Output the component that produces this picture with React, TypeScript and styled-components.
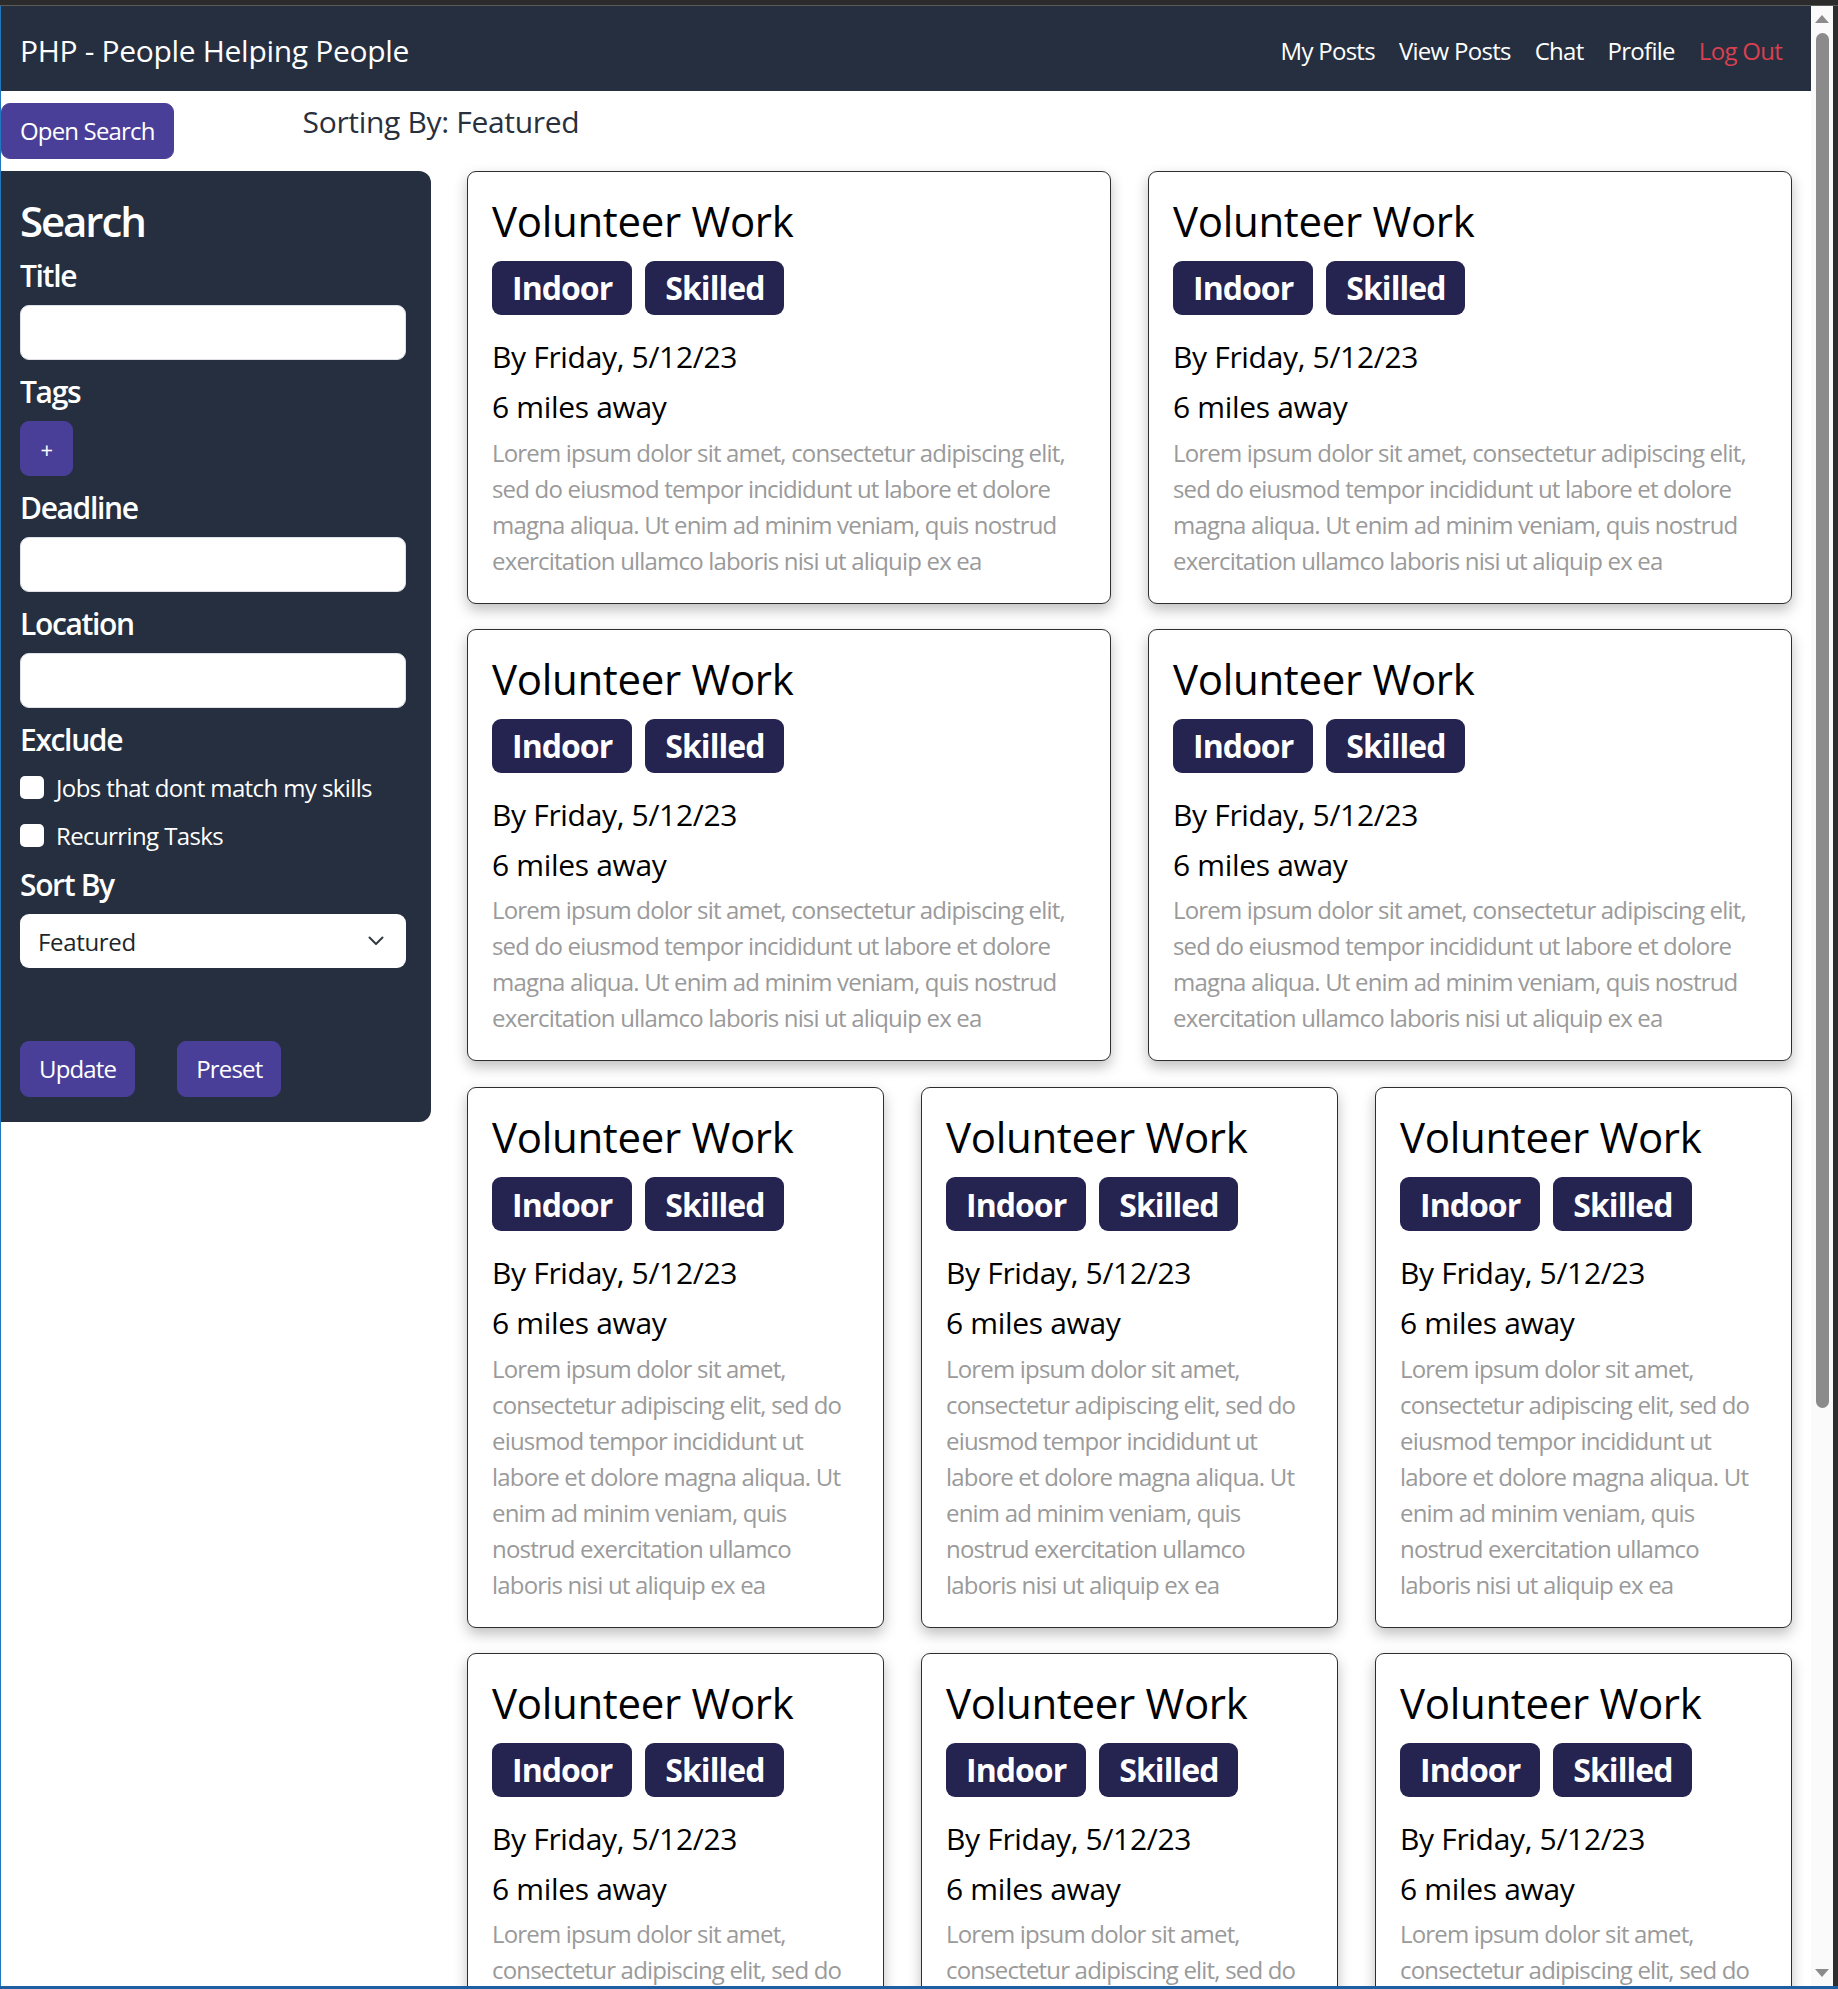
import React from "react";
import styled, { createGlobalStyle } from "styled-components";

const GlobalStyle = createGlobalStyle`
  html, body {
    margin: 0;
    padding: 0;
    height: 100%;
    overflow: hidden;
    background: #2d2d2d;
  }
  body {
    font-family: "Open Sans", "Noto Sans", "Liberation Sans", sans-serif;
    letter-spacing: -0.02em;
  }
  #root { height: 100%; }
  *, *::before, *::after { box-sizing: border-box; }
`;

const Frame = styled.div`
  height: 100vh;
  display: flex;
  flex-direction: column;
  background: #2d2d2d;
`;

const TopChrome = styled.div`
  flex: none;
  height: 6px;
  background: #2b2b2b;
  border-bottom: 1px solid #5b5b5b;
`;

const Middle = styled.div`
  flex: 1;
  min-height: 0;
  display: flex;
`;

const LeftEdge = styled.div`
  flex: none;
  width: 1px;
  background: #2077c0;
`;

const RightEdge = styled.div`
  flex: none;
  width: 5px;
  background: #2d2d2d;
`;

const BottomChrome = styled.div`
  flex: none;
  height: 3px;
  background: #1d5fa0;
`;

const Viewport = styled.div`
  flex: 1;
  min-width: 0;
  overflow: hidden;
  background: #ffffff;
`;

/* drawn window scrollbar */
const ScrollTrack = styled.div`
  flex: none;
  width: 22px;
  background: #fafafa;
  display: flex;
  flex-direction: column;
`;

const ScrollArrow = styled.div`
  flex: none;
  height: 26px;
  display: flex;
  align-items: center;
  padding-left: 4px;
`;

const ThumbLane = styled.div`
  flex: 1;
  padding: 1px 0 0 5px;
`;

const Thumb = styled.div`
  width: 13px;
  background: #8b8b8b;
  border-radius: 7px;
`;

const Navbar = styled.nav`
  height: 85px;
  background: #252f3f;
  display: flex;
  align-items: center;
  justify-content: space-between;
  padding: 4px 29px 0 19px;
`;

const Brand = styled.a`
  font-size: 30px;
  line-height: 45px;
  color: #ffffff;
  text-decoration: none;
`;

const NavLinks = styled.div`
  display: flex;
  align-items: center;
  gap: 24px;
`;

const NavLink = styled.a<{ $danger?: boolean }>`
  font-size: 24px;
  line-height: 36px;
  letter-spacing: -0.03em;
  color: ${(p) => (p.$danger ? "#d9404f" : "#ffffff")};
  text-decoration: none;
`;

const Toolbar = styled.div`
  display: flex;
  align-items: flex-start;
  gap: 129px;
  padding-top: 12px;
`;

const PrimaryButton = styled.button`
  font-family: inherit;
  letter-spacing: -0.035em;
  background: #4a3f98;
  color: #ffffff;
  border: 1px solid #4a3f98;
  border-radius: 9px;
  font-size: 24px;
  line-height: 36px;
  padding: 9px 18px;
  cursor: pointer;
`;

const AddTagButton = styled(PrimaryButton)`
  width: 53px;
  height: 55px;
  padding: 0;
  font-size: 22px;
  display: block;
  margin-bottom: 14px;
`;

const SortingLabel = styled.h5`
  margin: 1px 0 0;
  font-size: 30px;
  font-weight: 500;
  line-height: 1.2;
  color: #29303d;
`;

const Main = styled.div`
  display: flex;
  align-items: flex-start;
  gap: 36px;
  padding: 12px 19px 30px 0;
`;

const Sidebar = styled.aside`
  flex: none;
  width: 430px;
  background: #252f3f;
  color: #ffffff;
  border-radius: 0 12px 12px 0;
  padding: 25px 25px 25px 19px;
`;

const SidebarTitle = styled.h3`
  margin: 0 0 12px;
  font-size: 42px;
  font-weight: 600;
  line-height: 1.2;
  letter-spacing: -0.05em;
`;

const FieldLabel = styled.h5`
  margin: 0 0 11px;
  font-size: 30px;
  font-weight: 600;
  line-height: 1.2;
  letter-spacing: -0.045em;
`;

const TextInput = styled.input`
  display: block;
  width: 100%;
  height: 55px;
  border: 1px solid #dee2e6;
  border-radius: 9px;
  background: #ffffff;
  margin: 0 0 14px;
  padding: 0 18px;
  font-size: 24px;
  font-family: inherit;
`;

const CheckRow = styled.label<{ $last?: boolean }>`
  display: flex;
  align-items: center;
  gap: 12px;
  height: 36px;
  font-size: 24px;
  letter-spacing: -0.025em;
  margin-bottom: ${(p) => (p.$last ? "14px" : "12px")};
`;

const Checkbox = styled.input`
  appearance: none;
  -webkit-appearance: none;
  width: 24px;
  height: 23px;
  margin: 0;
  background: #ffffff;
  border-radius: 5px;
  flex: none;
`;

const SelectBox = styled.div`
  height: 54px;
  background: #ffffff;
  border-radius: 9px;
  padding: 0 22px 0 18px;
  display: flex;
  align-items: center;
  justify-content: space-between;
  font-size: 24px;
  color: #212529;
`;

const ButtonRow = styled.div`
  display: flex;
  gap: 42px;
  margin-top: 73px;
`;

const CardsColumn = styled.div`
  flex: 1;
  min-width: 0;
  display: flex;
  flex-direction: column;
  gap: 26px;
`;

const CardGrid = styled.div<{ $cols: number }>`
  display: grid;
  grid-template-columns: repeat(${(p) => p.$cols}, minmax(0, 1fr));
  column-gap: 37px;
  row-gap: 25px;
`;

const Card = styled.article`
  background: #ffffff;
  border: 1px solid #2e2e2e;
  border-radius: 9px;
  box-shadow: 0 6px 14px rgba(0, 0, 0, 0.25);
  padding: 24px;
`;

const CardTitle = styled.h3`
  margin: 0 0 14.6px;
  font-size: 42px;
  font-weight: 500;
  line-height: 1.2;
  color: #000000;
`;

const TagRow = styled.div`
  display: flex;
  gap: 13px;
  margin-bottom: 25px;
`;

const Tag = styled.span`
  height: 54px;
  padding: 0 20px;
  display: inline-flex;
  align-items: center;
  background: #25234f;
  color: #ffffff;
  font-size: 32px;
  font-weight: 700;
  letter-spacing: -0.03em;
  border-radius: 9px;
`;

const Meta = styled.h5<{ $gap: number }>`
  margin: 0 0 ${(p) => p.$gap}px;
  font-size: 30px;
  font-weight: 500;
  line-height: 1.12;
  color: #000000;
`;

const CardBody = styled.p`
  margin: 0;
  font-size: 24px;
  line-height: 36px;
  letter-spacing: -0.034em;
  color: #9a9a9a;
`;

const LOREM =
  "Lorem ipsum dolor sit amet, consectetur adipiscing elit, sed do eiusmod tempor incididunt ut labore et dolore magna aliqua. Ut enim ad minim veniam, quis nostrud exercitation ullamco laboris nisi ut aliquip ex ea";

const PostCard: React.FC = () => (
  <Card>
    <CardTitle>Volunteer Work</CardTitle>
    <TagRow>
      <Tag>Indoor</Tag>
      <Tag>Skilled</Tag>
    </TagRow>
    <Meta $gap={16.4}>By Friday, 5/12/23</Meta>
    <Meta $gap={11}>6 miles away</Meta>
    <CardBody>{LOREM}</CardBody>
  </Card>
);

const Chevron: React.FC = () => (
  <svg width="16" height="10" viewBox="0 0 16 10" fill="none">
    <path d="M1.5 1.5 8 8l6.5-6.5" stroke="#343a40" strokeWidth="2" strokeLinecap="round" strokeLinejoin="round" />
  </svg>
);

const Triangle: React.FC<{ down?: boolean }> = ({ down }) => (
  <svg width="14" height="8" viewBox="0 0 14 8">
    <polygon points={down ? "0,0 14,0 7,8" : "0,8 14,8 7,0"} fill="#8b8b8b" />
  </svg>
);

export default function App() {
  return (
    <>
      <GlobalStyle />
      <Frame>
        <TopChrome />
        <Middle>
          <LeftEdge />
          <Viewport>
            <Navbar>
              <Brand>PHP - People Helping People</Brand>
              <NavLinks>
                <NavLink>My Posts</NavLink>
                <NavLink>View Posts</NavLink>
                <NavLink>Chat</NavLink>
                <NavLink>Profile</NavLink>
                <NavLink $danger>Log Out</NavLink>
              </NavLinks>
            </Navbar>
            <Toolbar>
              <PrimaryButton>Open Search</PrimaryButton>
              <SortingLabel>Sorting By: Featured</SortingLabel>
            </Toolbar>
            <Main>
              <Sidebar>
                <SidebarTitle>Search</SidebarTitle>
                <FieldLabel>Title</FieldLabel>
                <TextInput type="text" />
                <FieldLabel>Tags</FieldLabel>
                <AddTagButton>+</AddTagButton>
                <FieldLabel>Deadline</FieldLabel>
                <TextInput type="text" />
                <FieldLabel>Location</FieldLabel>
                <TextInput type="text" />
                <FieldLabel>Exclude</FieldLabel>
                <CheckRow>
                  <Checkbox type="checkbox" />
                  Jobs that dont match my skills
                </CheckRow>
                <CheckRow $last>
                  <Checkbox type="checkbox" />
                  Recurring Tasks
                </CheckRow>
                <FieldLabel>Sort By</FieldLabel>
                <SelectBox>
                  <span>Featured</span>
                  <Chevron />
                </SelectBox>
                <ButtonRow>
                  <PrimaryButton>Update</PrimaryButton>
                  <PrimaryButton>Preset</PrimaryButton>
                </ButtonRow>
              </Sidebar>
              <CardsColumn>
                <CardGrid $cols={2}>
                  {Array.from({ length: 4 }).map((_, i) => (
                    <PostCard key={i} />
                  ))}
                </CardGrid>
                <CardGrid $cols={3}>
                  {Array.from({ length: 9 }).map((_, i) => (
                    <PostCard key={i} />
                  ))}
                </CardGrid>
              </CardsColumn>
            </Main>
          </Viewport>
          <ScrollTrack>
            <ScrollArrow>
              <Triangle />
            </ScrollArrow>
            <ThumbLane>
              <Thumb style={{ height: 1375 }} />
            </ThumbLane>
            <ScrollArrow>
              <Triangle down />
            </ScrollArrow>
          </ScrollTrack>
          <RightEdge />
        </Middle>
        <BottomChrome />
      </Frame>
    </>
  );
}
